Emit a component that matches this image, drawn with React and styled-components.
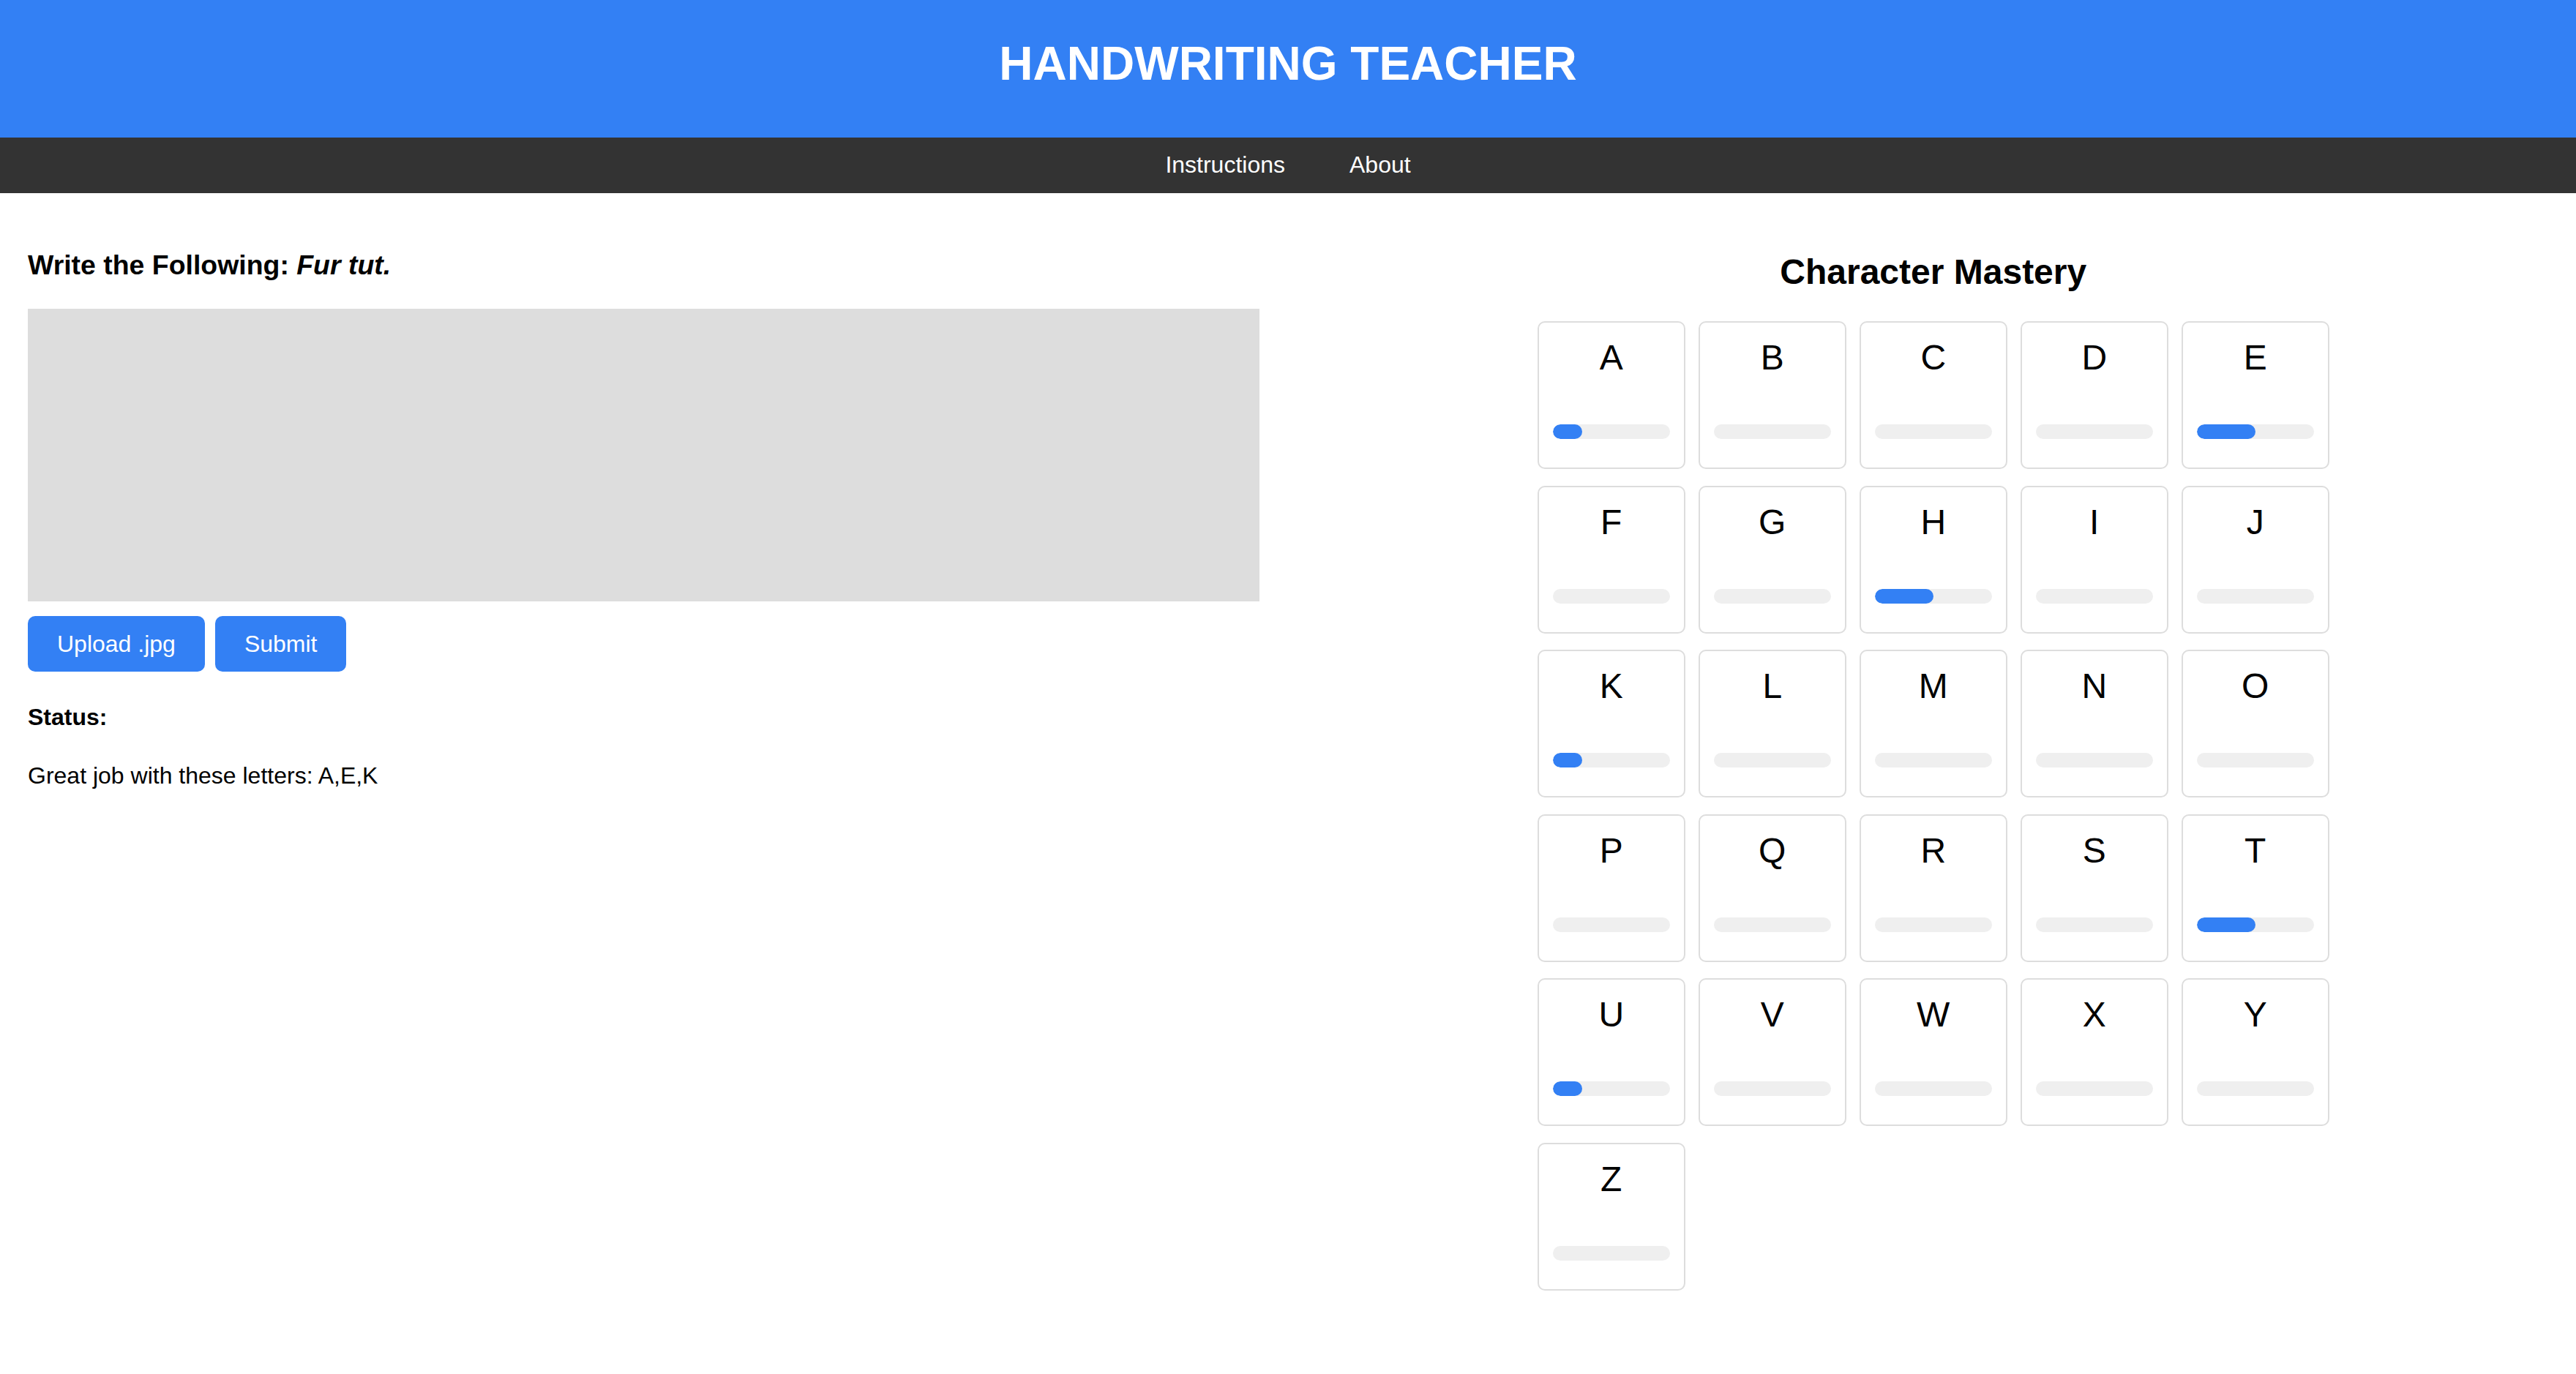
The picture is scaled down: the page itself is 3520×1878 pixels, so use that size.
import React from 'react';
import styled, { createGlobalStyle } from 'styled-components';

const letters = 'ABCDEFGHIJKLMNOPQRSTUVWXYZ'.split('');
const mastery = { A: 25, E: 50, H: 50, K: 25, T: 50, U: 25 };

const GlobalStyle = createGlobalStyle`
  html, body {
    margin: 0;
    padding: 0;
    background: #fff;
  }
  body {
    font-family: "Liberation Sans", Arial, sans-serif;
    color: #000;
  }
`;

const Header = styled.header`
  background-color: #3380f4;
  padding: 50px 0 64px;
  text-align: center;
`;

const Title = styled.h1`
  margin: 0;
  font-size: 64px;
  line-height: 74px;
  font-weight: bold;
  color: #fff;
`;

const Nav = styled.nav`
  background-color: #333;
  display: flex;
  justify-content: center;
  gap: 88px;
  padding: 19px 0 20px;
`;

const NavLink = styled.a`
  color: #fff;
  font-size: 32px;
  line-height: 37px;
  text-decoration: none;
  cursor: pointer;
`;

const Main = styled.main`
  display: flex;
  gap: 80px;
  padding: 40px 37px 40px 38px;
`;

const Column = styled.section`
  flex: 1;
  min-width: 0;
`;

const Prompt = styled.h3`
  margin: 37px 0 38px;
  font-size: 37.44px;
  line-height: 43px;
  font-weight: bold;
`;

const Canvas = styled.div`
  width: 100%;
  height: 400px;
  background-color: #ddd;
`;

const ButtonRow = styled.div`
  display: flex;
  gap: 14px;
  margin-top: 20px;
`;

const Button = styled.button`
  background-color: #3380f4;
  color: #fff;
  border: none;
  border-radius: 10px;
  padding: 20px 40px;
  font-family: "Liberation Sans", Arial, sans-serif;
  font-size: 32px;
  line-height: 36px;
  cursor: pointer;
`;

const StatusLabel = styled.p`
  margin: 44px 0 0;
  font-size: 32px;
  line-height: 37px;
  font-weight: bold;
`;

const StatusText = styled.p`
  margin: 43px 0 0;
  font-size: 32px;
  line-height: 37px;
`;

const MasteryTitle = styled.h2`
  margin: 40px 0 40px;
  font-size: 48px;
  line-height: 55px;
  font-weight: bold;
  text-align: center;
`;

const Grid = styled.div`
  display: grid;
  grid-template-columns: repeat(5, 202px);
  column-gap: 18px;
  row-gap: 22.5px;
  justify-content: center;
`;

const Card = styled.div`
  box-sizing: border-box;
  width: 202px;
  height: 202px;
  border: 2px solid #ddd;
  border-radius: 10px;
  padding: 20px 0 0;
  display: flex;
  flex-direction: column;
  align-items: center;
`;

const Letter = styled.div`
  font-size: 48px;
  line-height: 55px;
`;

const Track = styled.div`
  width: 160px;
  height: 20px;
  margin-top: 64px;
  border-radius: 10px;
  background-color: #efefef;
  overflow: hidden;
`;

const Fill = styled.div`
  height: 100%;
  border-radius: 10px;
  background-color: #3380f4;
`;

export default function App() {
  return (
    <>
      <GlobalStyle />
      <Header>
        <Title>HANDWRITING TEACHER</Title>
      </Header>
      <Nav>
        <NavLink>Instructions</NavLink>
        <NavLink>About</NavLink>
      </Nav>
      <Main>
        <Column>
          <Prompt>
            Write the Following: <em>Fur tut.</em>
          </Prompt>
          <Canvas />
          <ButtonRow>
            <Button type="button">Upload .jpg</Button>
            <Button type="button">Submit</Button>
          </ButtonRow>
          <StatusLabel>Status:</StatusLabel>
          <StatusText>Great job with these letters: A,E,K</StatusText>
        </Column>
        <Column>
          <MasteryTitle>Character Mastery</MasteryTitle>
          <Grid>
            {letters.map((l) => (
              <Card key={l}>
                <Letter>{l}</Letter>
                <Track>
                  <Fill style={{ width: `${mastery[l] || 0}%` }} />
                </Track>
              </Card>
            ))}
          </Grid>
        </Column>
      </Main>
    </>
  );
}
